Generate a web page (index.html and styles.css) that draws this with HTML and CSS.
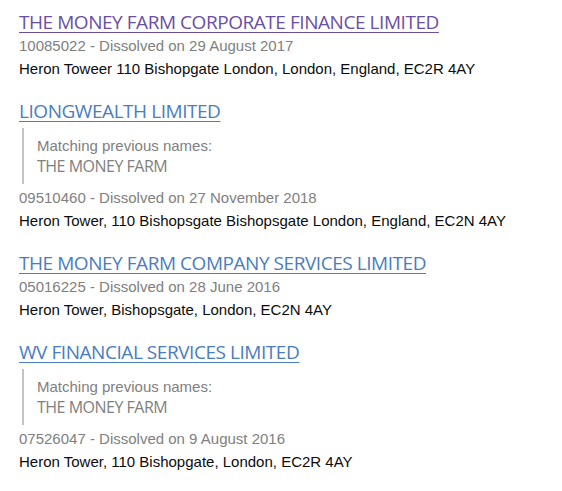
FILE: index.html
```html
<!DOCTYPE html>
<html lang="en">
<head>
    <meta charset="UTF-8">
    <title>Search results</title>
    <link rel="stylesheet" href="styles.css">
</head>
<body>
    <ul class="results">
        <li class="result">
            <h3><a href="#" class="visited">THE MONEY FARM CORPORATE FINANCE LIMITED</a></h3>
            <p class="meta">10085022 - Dissolved on 29 August 2017</p>
            <p class="address">Heron Toweer 110 Bishopgate London, London, England, EC2R 4AY</p>
        </li>
        <li class="result">
            <h3><a href="#">LIONGWEALTH LIMITED</a></h3>
            <div class="previous">
                <p>Matching previous names:</p>
                <p class="prev-name">THE MONEY FARM</p>
            </div>
            <p class="meta">09510460 - Dissolved on 27 November 2018</p>
            <p class="address">Heron Tower, 110 Bishopsgate Bishopsgate London, England, EC2N 4AY</p>
        </li>
        <li class="result">
            <h3><a href="#">THE MONEY FARM COMPANY SERVICES LIMITED</a></h3>
            <p class="meta">05016225 - Dissolved on 28 June 2016</p>
            <p class="address">Heron Tower, Bishopsgate, London, EC2N 4AY</p>
        </li>
        <li class="result">
            <h3><a href="#">WV FINANCIAL SERVICES LIMITED</a></h3>
            <div class="previous">
                <p>Matching previous names:</p>
                <p class="prev-name">THE MONEY FARM</p>
            </div>
            <p class="meta">07526047 - Dissolved on 9 August 2016</p>
            <p class="address">Heron Tower, 110 Bishopgate, London, EC2R 4AY</p>
        </li>
    </ul>
</body>
</html>
```

FILE: styles.css
```css
/* General Styles */
body {
    margin: 0;
    padding: 10px 19px;
    background-color: #fff;
    font-family: "Liberation Sans", Arial, sans-serif;
    font-size: 15px;
    color: #0b0c0c;
}

.results {
    list-style: none;
    margin: 0;
    padding: 0;
}

.result {
    margin-bottom: 19px;
}

.result h3 {
    margin: 0;
    font-family: "Open Sans", sans-serif;
    font-weight: normal;
    font-size: 19px;
    line-height: 24px;
    letter-spacing: -0.45px;
}

.result h3 a {
    color: #4a7dbd;
    text-decoration: underline;
    text-decoration-thickness: 1px;
    text-underline-offset: 3px;
}

.result h3 a.visited {
    color: #6a4fa3;
}

.result p {
    margin: 0;
    line-height: 23px;
}

.meta {
    color: #808080;
}

/* Previous names block */
.previous {
    margin: 5px 0 2px 3px;
    padding: 8px 0 8px 13px;
    border-left: 2px solid #c4c4c4;
    color: #808080;
}

.result .previous p {
    line-height: 20px;
}

.result .previous .prev-name {
    font-family: "Open Sans", sans-serif;
    font-size: 16px;
    letter-spacing: -0.5px;
}
```
